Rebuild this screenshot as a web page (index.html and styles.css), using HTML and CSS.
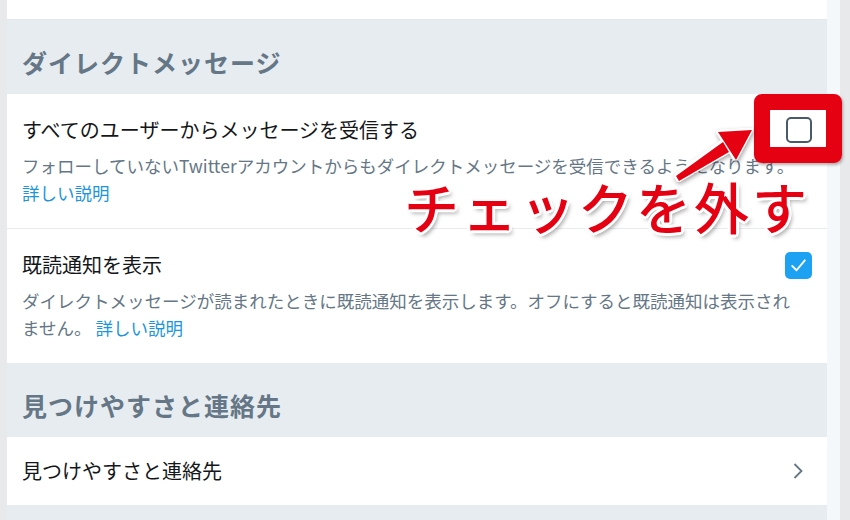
FILE: index.html
```html
<!DOCTYPE html>
<html lang="ja">
<head>
  <meta charset="UTF-8" />
  <meta name="viewport" content="width=device-width, initial-scale=1.0"/>
  <title>ダイレクトメッセージ設定</title>
  <link rel="stylesheet" href="styles.css">
</head>
<body>
  <div class="page">
    <main class="panel">
      <div class="panel-top"></div>

      <h2 class="section-title">ダイレクトメッセージ</h2>
      <div class="setting">
        <div class="setting-head">
          <span class="setting-label">すべてのユーザーからメッセージを受信する</span>
          <span class="check"></span>
        </div>
        <p class="setting-desc">フォローしていないTwitterアカウントからもダイレクトメッセージを受信できるようになります。<br><a href="#">詳しい説明</a></p>
      </div>
      <div class="setting">
        <div class="setting-head">
          <span class="setting-label">既読通知を表示</span>
          <span class="check checked">
            <svg viewBox="0 0 24 24" width="19" height="19"><polyline points="4,12.5 9.5,18 20,5.5" fill="none" stroke="#fff" stroke-width="2.4" stroke-linecap="round" stroke-linejoin="round"/></svg>
          </span>
        </div>
        <p class="setting-desc">ダイレクトメッセージが読まれたときに既読通知を表示します。オフにすると既読通知は表示されません。 <a href="#">詳しい説明</a></p>
      </div>

      <h2 class="section-title">見つけやすさと連絡先</h2>
      <div class="link-row">
        <span class="setting-label">見つけやすさと連絡先</span>
        <svg class="chevron" viewBox="0 0 10 16" width="10" height="16"><polyline points="1.5,1 8.5,8 1.5,15" fill="none" stroke="#657786" stroke-width="1.8"/></svg>
      </div>
      <div class="panel-bottom"></div>
    </main>
    <div class="scroll-track"></div>

    <!-- annotation layer -->
    <div class="mark-box"></div>
    <svg class="mark-arrow" viewBox="0 0 90 64" width="90" height="64">
      <polygon points="4,56 7,61 57,32 51,22" fill="#e50012"/>
      <polygon points="80,10 64,40 46,12" fill="#e50012"/>
    </svg>
    <div class="mark-text">チェックを外す</div>
  </div>
</body>
</html>
```

FILE: styles.css
```css
body {
  margin: 0;
  background: #e7e9eb;
  font-family: "Noto Sans CJK JP", "Noto Sans", sans-serif;
  color: #14171a;
}

.page {
  position: relative;
  display: flex;
  width: 850px;
  height: 520px;
  overflow: hidden;
}

.panel {
  margin-left: 7px;
  width: 820px;
  background: #e6ecf0;
}

.scroll-track {
  width: 13px;
  background: #f5f8fa;
}

.panel-top {
  height: 19px;
  background: #fff;
  border-bottom: 1px solid #e1e8ed;
}

.section-title {
  margin: 0;
  padding: 27px 15px 17px;
  font-size: 25px;
  line-height: 30px;
  font-weight: 700;
  color: #657786;
  letter-spacing: 1px;
}

.setting {
  background: #fff;
  padding: 22px 15px 22px;
}

.setting + .setting {
  border-top: 1px solid #e6ecf0;
  padding-bottom: 22px;
}

.setting-head {
  display: flex;
  justify-content: space-between;
  align-items: center;
  height: 28px;
}

.setting-label {
  font-size: 20px;
  line-height: 28px;
}

.check {
  width: 26px;
  height: 26px;
  box-sizing: border-box;
  border: 2px solid #4b5a69;
  border-radius: 5px;
  display: flex;
  align-items: center;
  justify-content: center;
}

.check.checked {
  width: 27px;
  height: 27px;
  border: none;
  background: #1da1f2;
}

.setting-desc {
  margin: 8px 0 0;
  max-width: 784px;
  font-size: 17.5px;
  line-height: 27px;
  color: #657786;
}

.setting-desc a {
  color: #1b95e0;
  text-decoration: none;
}

.link-row {
  background: #fff;
  height: 68px;
  padding: 0 24px 0 15px;
  display: flex;
  align-items: center;
  justify-content: space-between;
}

.panel-bottom {
  height: 20px;
}

/* annotation overlay */
.mark-box {
  position: absolute;
  left: 754px;
  top: 94px;
  width: 56px;
  height: 37px;
  border: 16px solid #e50012;
  border-radius: 8px;
  box-shadow: 1px 2px 3px rgba(0,0,0,0.3);
}

.mark-arrow {
  position: absolute;
  left: 672px;
  top: 120px;
  filter: drop-shadow(1.5px 0 0 #fff) drop-shadow(-1.5px 0 0 #fff) drop-shadow(0 1.5px 0 #fff) drop-shadow(0 -1.5px 0 #fff) drop-shadow(1px 2px 2px rgba(0,0,0,0.35));
}

.mark-text {
  position: absolute;
  left: 404px;
  top: 174px;
  font-size: 55px;
  line-height: 62px;
  font-weight: 500;
  letter-spacing: 3px;
  color: #e50012;
  text-shadow:
    3px 0 0 #fff, -3px 0 0 #fff, 0 3px 0 #fff, 0 -3px 0 #fff,
    2px 2px 0 #fff, -2px 2px 0 #fff, 2px -2px 0 #fff, -2px -2px 0 #fff,
    3px 4px 4px rgba(0,0,0,0.35);
}
```
